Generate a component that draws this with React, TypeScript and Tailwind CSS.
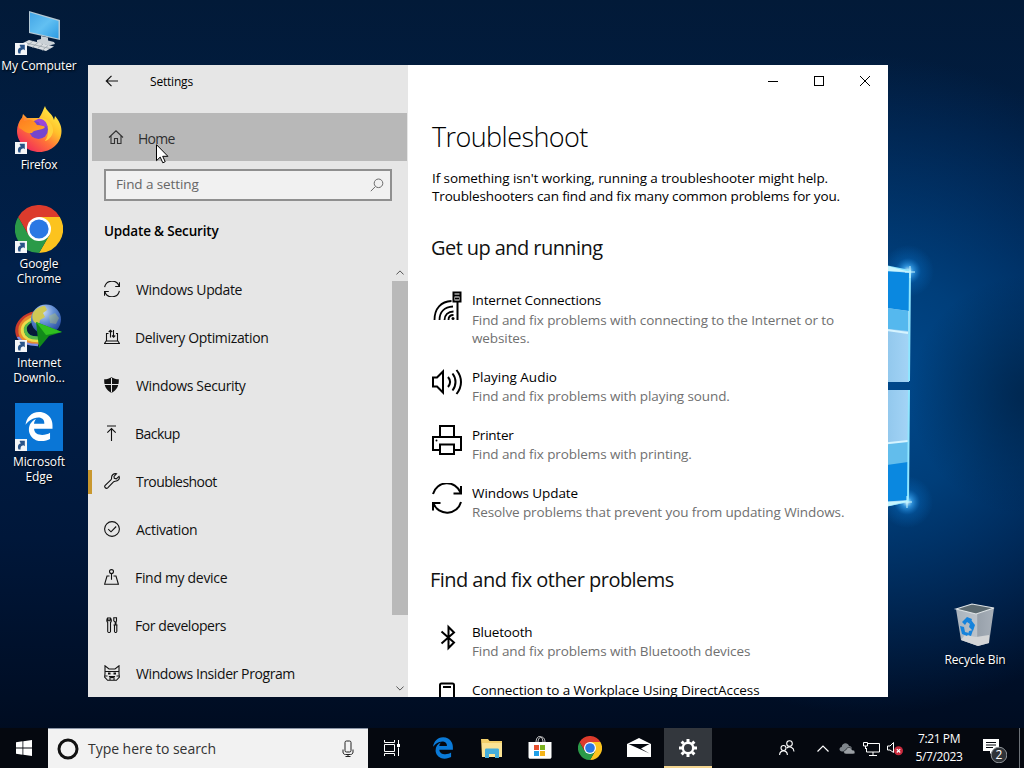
import React from 'react'

type IconProps = { className?: string }

const EDGE_PATH =
  'M25.714 228.163c.111-.162.23-.323.342-.485-.021.162-.045.323-.065.485h-.277zm460.572 15.508c0-44.032-7.754-84.465-28.801-122.405C416.498 47.879 343.912 8.001 258.893 8.001 118.962 7.724 40.617 113.214 26.056 227.679c42.429-61.312 117.073-121.376 220.375-124.966 0 0 109.666 0 99.419 104.957H169.997c6.369-37.386 18.554-58.986 34.339-78.915-75.048 34.893-121.85 96.096-120.742 188.315.83 71.448 50.124 144.836 120.743 171.976 83.357 31.843 192.776 7.2 240.132-21.324V363.307c-80.864 56.494-270.871 60.925-272.255-67.572h314.073v-52.064z'

/* ---------- Desktop icons ---------- */

const ShortcutArrow = () => (
  <svg viewBox="0 0 12 12" className="absolute bottom-0 left-0 w-3 h-3">
    <rect width="12" height="12" fill="#f4f6f8" />
    <path d="M3.500 10.500C2.200 7 3.400 4.600 6 4.200L4.800 3V1.800h5v5.400L8.400 6.200C6.200 6.600 5.200 8 5.600 10.500z" fill="#2a5488" />
  </svg>
)

const ComputerIcon = () => (
  <svg viewBox="0 0 48 48" className="w-12 h-12">
    <defs>
      <linearGradient id="screen" x1="0" y1="0" x2="1" y2="1">
        <stop offset="0" stopColor="#43a5e6" />
        <stop offset="0.5" stopColor="#62c0f2" />
        <stop offset="1" stopColor="#2c9be3" />
      </linearGradient>
    </defs>
    <path d="M14 4l31 9v20l-31-7z" fill="#b4c8d4" />
    <path d="M15 5.500l28.500 8.500v17.500L15 25z" fill="url(#screen)" />
    <path d="M26 29l7 1.500v3l6 1.500 1 2-6 1.500-12-3v-2.500l4-1z" fill="#c9d0d5" />
    <path d="M14 33l25 6.500-8 4.500L6 37z" fill="#dadee1" />
    <path d="M11 36l24 5.500M18 34l-6 5M23 35.500l-6 5M28 37l-6 5M33 38.500l-6 5" stroke="#9aa4ab" strokeWidth="0.800" />
  </svg>
)

const FirefoxIcon = () => (
  <svg viewBox="0 0 48 48" className="w-12 h-12">
    <defs>
      <linearGradient id="fox" x1="0.850" y1="0.050" x2="0.150" y2="0.950">
        <stop offset="0" stopColor="#fff14a" />
        <stop offset="0.350" stopColor="#ffc02a" />
        <stop offset="0.620" stopColor="#ff7139" />
        <stop offset="1" stopColor="#f0245e" />
      </linearGradient>
      <linearGradient id="foxhead" x1="0" y1="0" x2="1" y2="1">
        <stop offset="0" stopColor="#ff7a1e" />
        <stop offset="1" stopColor="#ffa528" />
      </linearGradient>
    </defs>
    <path d="M30 0c1 5 8 8 9 14l1-4c4 5 6.500 9 6.500 15C46.500 37 36.500 46 24.500 46S2 37 2 25c0-5 2-10 5-13l1-4 4 4h12c3-4 4-8 6-12z" fill="url(#fox)" />
    <path d="M24 12c9-1 15 7 14 14-2 8-8 9-8 9 5-7 3-13-1-17z" fill="#ffd23c" />
    <circle cx="23.500" cy="23.500" r="9.500" fill="#7446cc" />
    <path d="M23 13c5-1 9 3 9.500 8l-7-2-2-3-4-1z" fill="#9a46d8" />
    <path d="M4 22c-1-5 2-9 4-11l1 4 4-1c4-1 7 2 9 5 4 0 7 1 8 2-1 2-4 2.500-7 3-3 .5-5 1-6 3C10 28 9 24 4 22z" fill="url(#foxhead)" />
  </svg>
)

const ChromeIcon = ({ className }: IconProps) => (
  <svg viewBox="0 0 48 48" className={className}>
    <path d="M24 12h20.800A24 24 0 0 1 24 48l10.400-18z" fill="#fcc31e" />
    <path d="M3.200 12A24 24 0 0 0 24 48l10.400-18L13.600 30z" fill="#2b9a48" />
    <path d="M3.200 12A24 24 0 0 1 44.800 12H24L13.600 30z" fill="#dc3b2c" />
    <circle cx="24" cy="24" r="12" fill="#fff" />
    <circle cx="24" cy="24" r="9.600" fill="#2b78e4" />
  </svg>
)

const DownloadManagerIcon = () => (
  <svg viewBox="0 0 48 48" className="w-12 h-12">
    <defs>
      <radialGradient id="globe" cx="0.400" cy="0.250" r="0.800">
        <stop offset="0" stopColor="#cfdcf4" />
        <stop offset="0.450" stopColor="#6490d4" />
        <stop offset="1" stopColor="#1c3f96" />
      </radialGradient>
    </defs>
    <g fill="none" strokeWidth="3.400">
      <path d="M20 9C9 11 1 19 2 28s9 12 22 11" stroke="#c83a2b" />
      <path d="M20 11.500C11 13 4 20 5 28s8 11 19 10" stroke="#e88a2d" />
      <path d="M20 14C13 16 6.500 21 7.500 27.500s8 9.500 17 9" stroke="#ecdc4a" />
      <path d="M20 17C14 19 9.500 22 10.500 27s6 7.500 14 7" stroke="#57b84a" />
      <path d="M3 33c4 7 12 8 20 8" stroke="#7c8fe6" strokeWidth="2.500" />
    </g>
    <path d="M20 17c-6 2-9 6-8 9s4 5 10 5z" fill="#061a38" />
    <circle cx="31" cy="15.500" r="15" fill="url(#globe)" />
    <path d="M18 9c3-5 8-7 12-7l2 4-4 3 2 4-5 3-1 5-5-3c-2-3-2-6-1-9z" fill="#d0c955" />
    <path d="M34 12l6-3 4 5-3 6-6-1z" fill="#b8c46a" opacity="0.400" />
    <path d="M21 18l26 10-13 4-10 12z" fill="#128a1a" />
    <path d="M21 18l26 10-16 3z" fill="#30c020" />
  </svg>
)

const EdgeTileIcon = () => (
  <svg viewBox="0 0 48 48" className="w-12 h-12">
    <rect width="48" height="48" fill="#0a76d6" />
    <svg x="9" y="8" width="30" height="31" viewBox="0 0 512 512">
      <path d={EDGE_PATH} fill="#fff" />
    </svg>
  </svg>
)

const RecycleBinIcon = () => (
  <svg viewBox="0 0 48 48" className="w-12 h-12">
    <defs>
      <linearGradient id="bin" x1="0" y1="0" x2="1" y2="0">
        <stop offset="0" stopColor="#a9b3bd" />
        <stop offset="0.550" stopColor="#bcc3ca" />
        <stop offset="0.570" stopColor="#98a1ab" />
        <stop offset="1" stopColor="#a7afb8" />
      </linearGradient>
    </defs>
    <path d="M5 8l20 4 18-5-5 35-11 3-17-6z" fill="url(#bin)" />
    <path d="M10 39l4-5 11 2 13-2 0 8-11 3z" fill="#d4d5d6" />
    <path d="M5 8l16-5 22 4-18 6z" fill="#5c6a70" stroke="#dfe4e6" strokeWidth="1.200" />
    <g fill="#1583dc">
      <path d="M11 21l5-5 5 2-2 5-3-2-2 3z" />
      <path d="M20 19l4 5-2 6-4-4z" />
      <path d="M9 25l4 1 1 5 4 1-2 3-5-2z" />
      <path d="M18 30l4-1-2 6-3-1z" />
    </g>
  </svg>
)

const desktopShortcuts = [
  { label: ['My Computer'], icon: <ComputerIcon />, top: 'top-[7px]', tracking: 'tracking-[-0.1px]' },
  { label: ['Firefox'], icon: <FirefoxIcon />, top: 'top-[106px]', tracking: 'tracking-[-0.25px]' },
  { label: ['Google', 'Chrome'], icon: <ChromeIcon className="w-12 h-12" />, top: 'top-[205px]', tracking: 'tracking-[-0.1px]' },
  { label: ['Internet', 'Downlo...'], icon: <DownloadManagerIcon />, top: 'top-[304px]', tracking: 'tracking-[-0.1px]' },
  { label: ['Microsoft', 'Edge'], icon: <EdgeTileIcon />, top: 'top-[403px]', tracking: 'tracking-[-0.1px]' },
]

const Wallpaper = () => (
  <svg viewBox="0 0 1024 768" className="absolute inset-0 w-full h-full">
    <defs>
      <linearGradient id="sky" x1="0" y1="0" x2="0" y2="1">
        <stop offset="0" stopColor="#021a38" />
        <stop offset="0.350" stopColor="#00204a" />
        <stop offset="0.700" stopColor="#00173a" />
        <stop offset="1" stopColor="#000a1c" />
      </linearGradient>
      <radialGradient id="glow" gradientUnits="userSpaceOnUse" cx="870" cy="385" r="330">
        <stop offset="0" stopColor="#004a8e" />
        <stop offset="0.350" stopColor="#004280" stopOpacity="0.900" />
        <stop offset="1" stopColor="#003a78" stopOpacity="0" />
      </radialGradient>
      <radialGradient id="shade" gradientUnits="userSpaceOnUse" cx="1030" cy="395" r="120">
        <stop offset="0" stopColor="#002348" stopOpacity="0.800" />
        <stop offset="1" stopColor="#002348" stopOpacity="0" />
      </radialGradient>
      <radialGradient id="flare">
        <stop offset="0" stopColor="#e8ffff" />
        <stop offset="0.200" stopColor="#3fb0ff" stopOpacity="0.700" />
        <stop offset="0.500" stopColor="#0a80e0" stopOpacity="0.250" />
        <stop offset="1" stopColor="#0a80e0" stopOpacity="0" />
      </radialGradient>
      <linearGradient id="pane" x1="0" y1="0" x2="1" y2="0">
        <stop offset="0" stopColor="#8cc4ea" />
        <stop offset="1" stopColor="#a4d4f6" />
      </linearGradient>
    </defs>
    <rect width="1024" height="768" fill="url(#sky)" />
    <rect width="1024" height="768" fill="url(#glow)" />
    <rect width="1024" height="768" fill="url(#shade)" />
    <circle cx="908" cy="271" r="26" fill="url(#flare)" />
    <circle cx="907" cy="502" r="26" fill="url(#flare)" />
    <path d="M880 265l30 6-1 111h-29z" fill="url(#pane)" />
    <path d="M880 270l29 3v38l-29-4z" fill="#0a88e0" />
    <path d="M880 307l28 4v20l-28-3z" fill="#55b8ee" />
    <path d="M880 329l28 4" stroke="#d6f4ff" strokeWidth="2" />
    <path d="M880 390h29v112l-29 6z" fill="url(#pane)" />
    <path d="M880 444l28-3v23l-28 3z" fill="#62bdec" />
    <path d="M880 466l28-4v38l-28 2z" fill="#0a88e0" />
    <path d="M880 444l28-3" stroke="#d6f4ff" strokeWidth="2" />
    <path d="M880 265l30 6-1 110" fill="none" stroke="#8fe6ff" strokeWidth="2" />
    <path d="M909 390l-1 111-28 6" fill="none" stroke="#8fe6ff" strokeWidth="2" />
    <path d="M880 264l30 8-30-1zM880 502l28-1-28 7z" fill="#c8f6ff" />
    <path d="M905 272h10M910 266v12M902 502h10M907 496v12" stroke="#c8f6ff" />
  </svg>
)

/* ---------- Sidebar icons, 16px line drawings ---------- */

const Line = ({ children, className = 'w-4 h-4' }: { children: React.ReactNode; className?: string }) => (
  <svg viewBox="0 0 16 16" className={className} fill="none" stroke="#111" strokeWidth="1.100">
    {children}
  </svg>
)

const HomeIcon = () => (
  <Line>
    <path d="M1 8.500L8 1.800l7 6.700M3 7v7.500h3.500V9.500h3v5H13V7" />
  </Line>
)

const SyncIcon = () => (
  <Line>
    <path d="M.6 6.200A7.600 7.600 0 0 1 15.200 5.200M15.500 1.200v4.300h-4.300M15.400 9.800A7.600 7.600 0 0 1 .8 10.800M.5 14.800v-4.300h4.300" />
  </Line>
)

const DeliveryIcon = () => (
  <Line>
    <path d="M4.500 4.500H2.500v7.500h11V4.500H12M2.500 11.500L.5 14.500h15l-2-3M6.500 8.500V1.200M4.700 3l1.800-1.800L8.200 3M9.500 1v7M8 6.500l1.600 1.600 1.600-1.600" />
  </Line>
)

const ShieldIcon = () => (
  <svg viewBox="0 0 16 16" className="w-4 h-4">
    <path d="M7.500.2C5.500 1.500 3 2.200.2 2.300 0 9 2 13 7.500 16 13 13 15 9 14.800 2.300 12 2.200 9.500 1.500 7.500.2z" fill="#111" />
    <path d="M7.500 1v14.500M0 7.500h15" stroke="#e6e6e6" strokeWidth="1" />
  </svg>
)

const BackupIcon = () => (
  <Line>
    <path d="M3 1h9M7.500 16V3.500M3.300 7.700l4.200-4.200 4.200 4.200" />
  </Line>
)

const WrenchIcon = () => (
  <Line>
    <path d="M15 3.300l-2.700 2.500-2-.4-.3-2L12.500.8C10 0 7.200 2 7.600 5.200c0 .8-.1 1-.7 1.600L1.200 12.300c-1.500 1.700.9 4 2.500 2.500l5.800-6c.6-.6 1-.6 1.700-.6C14.200 8.200 16.200 5.800 15 3.300z" />
  </Line>
)

const ActivationIcon = () => (
  <Line>
    <circle cx="8" cy="8" r="7.400" />
    <path d="M4.200 8.200l2.800 2.600 5.200-5.300" />
  </Line>
)

const FindDeviceIcon = () => (
  <Line>
    <circle cx="7.500" cy="2.600" r="2" />
    <path d="M7.500 4.600v6.200M5.500 7H3L.6 15.300h13.800L12 7H9.500" />
  </Line>
)

const DevelopersIcon = () => (
  <Line>
    <path d="M4 .8v3h2v-3C7.800 2 7.600 4.500 6.500 5.500v9c-.3 1.300-2.500 1.300-2.800 0v-9C2.500 4.500 2.400 2 4 .8zM9.800.8h2.700v3L12 5v3h.8v6.500c-.3 1.300-2 1.300-2.300 0V8h.7V5l-1.400-1.200zM9.500 8h4" />
  </Line>
)

const InsiderIcon = () => (
  <Line>
    <path d="M1 .8v7.700L.6 12l3 3.300h8.800l3-3.300-.4-3.500V.8l-4 3.200H5zM1 6.500h14M.5 11h3M12.500 11h3M5 11.500c1 1.500 5 1.500 6 0M5 11.500h6M6 15v-2M10 15v-2" />
    <path d="M4 8.500h2.500M9.500 8.500H12" strokeWidth="2" />
  </Line>
)

const sidebarItems = [
  { name: 'Windows Update', icon: <SyncIcon />, offset: 'ml-4', tracking: 'tracking-[-0.36px]' },
  { name: 'Delivery Optimization', icon: <DeliveryIcon />, offset: 'ml-[15px]', tracking: 'tracking-[-0.34px]' },
  { name: 'Windows Security', icon: <ShieldIcon />, offset: 'ml-4', tracking: 'tracking-[-0.36px]' },
  { name: 'Backup', icon: <BackupIcon />, offset: 'ml-[15px]', tracking: 'tracking-[-0.55px]' },
  { name: 'Troubleshoot', icon: <WrenchIcon />, offset: 'ml-4', tracking: 'tracking-[-0.57px]', active: true },
  { name: 'Activation', icon: <ActivationIcon />, offset: 'ml-4', tracking: 'tracking-[-0.3px]' },
  { name: 'Find my device', icon: <FindDeviceIcon />, offset: 'ml-[15px]', tracking: 'tracking-[-0.32px]' },
  { name: 'For developers', icon: <DevelopersIcon />, offset: 'ml-[15px]', tracking: 'tracking-[-0.43px]' },
  { name: 'Windows Insider Program', icon: <InsiderIcon />, offset: 'ml-4', tracking: 'tracking-[-0.41px]' },
]

/* ---------- Troubleshooter icons, 32px ---------- */

const Big = ({ children }: { children: React.ReactNode }) => (
  <svg viewBox="0 0 32 32" className="w-8 h-8" fill="none" stroke="#000" strokeWidth="2">
    {children}
  </svg>
)

const InternetIcon = () => (
  <Big>
    <path d="M3.500 30C3.500 18.500 10 11.500 20.500 11M8.500 30c0-8 5-13 13.500-13.500M13.500 30c0-5 3.500-8.500 9-8.500M17.500 30c0-3 2-5 5-5" strokeWidth="1.800" />
    <path d="M22.500 2.500h7v9h-7zM26.500 11.500V30" />
    <path d="M22 5.500h8M24 8.500h4" />
    <circle cx="22" cy="28.500" r="1.500" fill="#000" stroke="none" />
  </Big>
)

const AudioIcon = () => (
  <Big>
    <path d="M2 10.500h4l6-6v21l-6-6H2zM17 10c2.500 3 2.500 7 0 10M21.500 6.500c4 5 4 12 0 17M25.500 3c6 7.500 6 16.500 0 24" />
  </Big>
)

const PrinterIcon = () => (
  <Big>
    <path d="M9 12V1h14v11M9 25H2V12h28v13h-7M9 19.500h14V29H9z" />
    <circle cx="5.500" cy="15.500" r="1" fill="#000" stroke="none" />
  </Big>
)

const UpdateIcon = () => (
  <Big>
    <path d="M2 11a14.500 14.500 0 0 1 27.500-1.500M30 3v7.500h-7.500M30 19a14.500 14.500 0 0 1-27.500 1.500M2 27.500V20h7.500" />
  </Big>
)

const BluetoothIcon = () => (
  <Big>
    <path d="M10.500 9.500l12.500 11-5.500 5.500V5L23 10.500 10.500 21.500" />
  </Big>
)

const WorkplaceIcon = () => (
  <Big>
    <path d="M9 30V5c0-1 .5-1.500 1.500-1.500h11c1 0 1.500.5 1.500 1.500v25z" />
    <path d="M12 7h8" />
  </Big>
)

type Troubleshooter = {
  title: string
  lines: string[]
  icon: React.ReactNode
  titleTracking: string
  gap: string
}

const upAndRunning: Troubleshooter[] = [
  {
    title: 'Internet Connections',
    lines: ['Find and fix problems with connecting to the Internet or to', 'websites.'],
    icon: <InternetIcon />,
    titleTracking: 'tracking-[-0.17px] mb-px',
    gap: 'mb-5',
  },
  {
    title: 'Playing Audio',
    lines: ['Find and fix problems with playing sound.'],
    icon: <AudioIcon />,
    titleTracking: 'tracking-[0px]',
    gap: 'mb-5',
  },
  {
    title: 'Printer',
    lines: ['Find and fix problems with printing.'],
    icon: <PrinterIcon />,
    titleTracking: 'tracking-[-0.25px]',
    gap: 'mb-5',
  },
  {
    title: 'Windows Update',
    lines: ['Resolve problems that prevent you from updating Windows.'],
    icon: <UpdateIcon />,
    titleTracking: 'tracking-[-0.08px]',
    gap: '',
  },
]

const otherProblems: Troubleshooter[] = [
  {
    title: 'Bluetooth',
    lines: ['Find and fix problems with Bluetooth devices'],
    icon: <BluetoothIcon />,
    titleTracking: 'tracking-[-0.2px]',
    gap: 'mb-5',
  },
  {
    title: 'Connection to a Workplace Using DirectAccess',
    lines: [],
    icon: <WorkplaceIcon />,
    titleTracking: 'tracking-[-0.08px]',
    gap: '',
  },
]

const TroubleshooterRow = ({ item }: { item: Troubleshooter }) => (
  <div className={`flex ${item.gap}`}>
    <div className="w-8 h-8 -ml-px mr-[9px] shrink-0">{item.icon}</div>
    <div className="whitespace-nowrap">
      <div className={`text-[13.5px] leading-5 text-black ${item.titleTracking}`}>{item.title}</div>
      {item.lines.map((line) => (
        <div key={line} className="text-[13.5px] leading-[18px] text-[#707070] tracking-[-0.1px]">
          {line}
        </div>
      ))}
    </div>
  </div>
)

/* ---------- Settings window ---------- */

const Sidebar = () => (
  <aside className="w-80 shrink-0 bg-[#e6e6e6] flex flex-col">
    <div className="h-8 shrink-0 flex items-center">
      <svg viewBox="0 0 14 14" className="ml-[17px] w-3.5 h-3.5" fill="none" stroke="#111" strokeWidth="1.200">
        <path d="M13 7H1.500M6.500 1.800L1.300 7l5.200 5.200" />
      </svg>
      <span className="ml-[31px] pt-0.5 text-xs text-black tracking-[-0.2px]">Settings</span>
    </div>
    <div className="mt-4 ml-1 mr-px h-12 shrink-0 bg-[#b8b8b8] flex items-center">
      <div className="ml-4 opacity-80"><HomeIcon /></div>
      <span className="ml-[14px] pt-0.5 text-[14px] text-[#2f2f2f] tracking-[-0.7px]">Home</span>
    </div>
    <div className="mt-2 mx-4 h-8 shrink-0 border-2 border-[#8f8f8f] bg-[#f1f1f1] flex items-center justify-between pl-[10px] pr-1.5">
      <span className="text-[13.5px] text-[#666] -mt-0.5 tracking-[-0.1px]">Find a setting</span>
      <svg viewBox="0 0 14 14" className="w-3.5 h-3.5" fill="none" stroke="#6b6b6b" strokeWidth="1">
        <circle cx="8.500" cy="5.300" r="4.300" />
        <path d="M5.400 8.500L.8 13.200" />
      </svg>
    </div>
    <div className="mt-5 ml-4 text-[13.5px] leading-5 font-semibold text-black tracking-[-0.17px]">
      Update &amp; Security
    </div>
    <div className="mt-[25px] flex-1 min-h-0 flex overflow-hidden">
      <nav className="flex-1">
        {sidebarItems.map((item) => (
          <div key={item.name} className="h-12 flex items-center">
            <div className={item.active ? 'w-1 h-6 bg-[#c9982f]' : 'w-1 h-6'} />
            <div className="ml-3 -mt-0.5">{item.icon}</div>
            <span className={`text-[14px] leading-5 text-[#111] whitespace-nowrap ${item.offset} ${item.tracking}`}>
              {item.name}
            </span>
          </div>
        ))}
      </nav>
      <div className="w-4 flex flex-col items-center">
        <svg viewBox="0 0 8 5" className="mt-1 w-2 h-[5px]" fill="none" stroke="#555">
          <path d="M.4 4.500L4 .9l3.600 3.600" />
        </svg>
        <div className="mt-1.5 h-[334px] w-full bg-[#b9b9b9]" />
        <svg viewBox="0 0 8 5" className="mt-[71px] w-2 h-[5px]" fill="none" stroke="#555">
          <path d="M.4.5L4 4.100 7.600.5" />
        </svg>
      </div>
    </div>
  </aside>
)

const SettingsWindow = () => (
  <div className="absolute left-[88px] top-[65px] w-[800px] h-[632px] flex overflow-hidden bg-white">
    <Sidebar />
    <main className="flex-1 min-w-0 flex flex-col">
      <div className="h-8 shrink-0 flex justify-end">
        <svg viewBox="0 0 138 32" className="w-[138px] h-8" fill="none" stroke="#000">
          <path d="M18 16.500h10" />
          <rect x="64.500" y="11.500" width="9" height="9" />
          <path d="M110 11l10 10M120 11l-10 10" />
        </svg>
      </div>
      <div className="pl-6">
        <h1 className="mt-[22px] text-[27px] leading-9 font-light text-black whitespace-nowrap tracking-[-0.58px]">
          Troubleshoot
        </h1>
        <p className="mt-[14px] text-[13.5px] leading-[18px] text-black whitespace-nowrap tracking-[-0.15px]">
          <span className="tracking-[-0.09px]">If something isn't working, running a troubleshooter might help.</span>
          <br />
          Troubleshooters can find and fix many common problems for you.
        </p>
        <h2 className="mt-[29px] -ml-px text-[20px] leading-7 text-[#111] whitespace-nowrap tracking-[-0.57px]">
          Get up and running
        </h2>
        <div className="mt-7">
          {upAndRunning.map((item) => (
            <TroubleshooterRow key={item.title} item={item} />
          ))}
        </div>
        <h2 className="mt-[45px] -ml-0.5 text-[20px] leading-7 text-[#111] whitespace-nowrap tracking-[-0.54px]">
          Find and fix other problems
        </h2>
        <div className="mt-7">
          {otherProblems.map((item) => (
            <TroubleshooterRow key={item.title} item={item} />
          ))}
        </div>
      </div>
    </main>
  </div>
)

/* ---------- Taskbar ---------- */

const Taskbar = () => (
  <footer className="absolute inset-x-0 bottom-0 h-10 bg-[#05080f] flex items-stretch text-white">
    <div className="w-12 flex items-center justify-center">
      <svg viewBox="0 0 16 16" className="w-4 h-4" fill="#fff">
        <path d="M0 2.200l6.500-.9v6.300H0zM7.300 1.200L16 0v7.600H7.300zM0 8.400h6.500v6.300L0 13.800zM7.300 8.400H16V16l-8.700-1.200z" />
      </svg>
    </div>
    <div className="w-80 bg-[#f2f2f2] border-t border-[#8b95a5] flex items-center">
      <svg viewBox="0 0 22 22" className="ml-[9px] w-[22px] h-[22px]" fill="none">
        <circle cx="11" cy="11" r="9" stroke="#111" strokeWidth="3" />
      </svg>
      <span className="ml-[9px] flex-1 text-[14px] text-[#333] whitespace-nowrap tracking-[-0.04px]">
        Type here to search
      </span>
      <svg viewBox="0 0 12 18" className="mr-[14px] w-3 h-[18px]" fill="none" stroke="#222">
        <rect x="3" y="1" width="6" height="11" rx="1.500" />
        <path d="M1 9.500v2.500c0 1.500 1 2.500 2.500 2.500h5c1.500 0 2.500-1 2.500-2.500V9.500M6 14.500V16.500M3.500 16.500h5" />
      </svg>
    </div>
    <div className="w-12 flex items-center justify-center">
      <svg viewBox="0 0 16 16" className="w-4 h-4" fill="none" stroke="#fff">
        <path d="M.5 0v2.500h10V0M.5 4.500h10v7H.5zM.5 16v-2.500h10V16M14.500 0v4M14.500 7.500V16" />
        <path d="M13 5.500h3" strokeWidth="3" />
      </svg>
    </div>
    <div className="w-[52px] flex items-center justify-center pl-0.5">
      <svg viewBox="0 0 512 512" className="w-[22px] h-[22px]">
        <path d={EDGE_PATH} fill="#0a7ad8" />
      </svg>
    </div>
    <div className="w-[46px] flex items-center justify-center pl-0.5">
      <svg viewBox="0 0 22 20" className="w-[22px] h-5">
        <path d="M0 1h7l1.500 2H21v16H1z" fill="#f3cf6a" />
        <path d="M1 5h20v14H1z" fill="#fbe394" />
        <path d="M4 20v-8c0-1 .5-1.500 1.500-1.500h11c1 0 1.500.5 1.500 1.500v8h-4v-4H8v4z" fill="#45aedb" />
      </svg>
    </div>
    <div className="w-[52px] flex items-center justify-center">
      <svg viewBox="0 0 24 24" className="w-6 h-6">
        <path d="M8 7c0-4 1.500-6.500 3.500-6.500S15 3 15 7M10 7c0-4 1.500-6 3.500-6s3.500 2 3.500 6" fill="none" stroke="#ddd" />
        <path d="M.5 6h23v15c0 1-.8 1.800-1.800 1.800H2.300c-1 0-1.800-.8-1.800-1.800z" fill="#fff" />
        <path d="M6 9h5v5H6z" fill="#e8502f" />
        <path d="M12 9h5v5h-5z" fill="#7db321" />
        <path d="M6 15h5v5H6z" fill="#1fa0e8" />
        <path d="M12 15h5v5h-5z" fill="#f5b51b" />
      </svg>
    </div>
    <div className="w-[46px] flex items-center justify-center pl-0.5">
      <ChromeIcon className="w-6 h-6" />
    </div>
    <div className="w-[52px] flex items-center justify-center pl-0.5">
      <svg viewBox="0 0 24 20" className="w-6 h-5">
        <path d="M0 6L12 0l12 6v13H0z" fill="#fff" />
        <path d="M1.500 6h21L14 10.500l8.500 5-11-5z" fill="#05080f" />
      </svg>
    </div>
    <div className="w-12 flex items-center justify-center bg-[#33373d] border-b-2 border-[#f3d590]">
      <svg viewBox="-10 -10 20 20" className="mt-px w-5 h-5" fill="none" stroke="#fff">
        <circle r="5.200" strokeWidth="2.400" />
        <path
          d="M0-9v3.200M0 9V5.800M-9 0h3.200M9 0H5.800M-6.400-6.400L-4.200-4.200M6.400 6.400L4.200 4.200M-6.400 6.400L-4.200 4.200M6.400-6.400L4.200-4.200"
          strokeWidth="3"
        />
      </svg>
    </div>
    <div className="flex-1 flex items-center justify-end">
      <svg viewBox="0 0 16 16" className="w-4 h-4" fill="none" stroke="#fff" strokeWidth="1.100">
        <circle cx="10.500" cy="3.500" r="2.800" />
        <circle cx="4.500" cy="8" r="2.500" />
        <path d="M.6 15c.3-5.500 7.500-5.500 7.800 0M7.800 8c2.500-2.500 7-.5 7.200 3.500" />
      </svg>
      <svg viewBox="0 0 12 7" className="ml-[22px] w-3 h-[7px]" fill="none" stroke="#fff" strokeWidth="1.200">
        <path d="M.5 6.500L6 1l5.500 5.500" />
      </svg>
      <svg viewBox="0 0 16 11" className="ml-[10px] w-4 h-[11px]">
        <path d="M3 8.500C0 8.500-.5 4.500 2.700 4 3-.5 9-1 10 3c3 0 3.500 3 2 5.500z" fill="#7f858b" />
        <path d="M7 11c-3 0-3-4 0-4 .5-3.500 5.500-3.500 6 0 3.500-.5 4 4 1 4z" fill="#9a9fa4" stroke="#05080f" strokeWidth="0.500" />
      </svg>
      <svg viewBox="0 0 17 15" className="ml-2 w-[17px] h-[15px]" fill="none" stroke="#fff">
        <path d="M5 2.500h11.500v8.500H3.500V7M10 11v3M6 14.500h8" />
        <path d="M.5 1.500h4V5h-4zM2.500 5v3" />
      </svg>
      <svg viewBox="0 0 17 16" className="ml-[7px] w-[17px] h-4" fill="none" stroke="#fff">
        <path d="M.5 6H3l3.500-3.500v10L3 10H.5z" />
        <circle cx="11.500" cy="10.800" r="4.500" fill="#c92a3d" stroke="none" />
        <path d="M9.800 9.100l3.400 3.400M13.200 9.100l-3.400 3.400" strokeWidth="1.200" />
      </svg>
      <div className="ml-2 w-[54px] text-center text-xs leading-[18px] whitespace-nowrap tracking-[-0.4px]">
        <div className="-mx-2">7:21 PM</div>
        <div className="-mx-2">5/7/2023</div>
      </div>
      <div className="relative ml-[17px] mt-1.5 w-6 h-6">
        <svg viewBox="0 0 24 24" className="w-6 h-6">
          <path d="M0 0h16v12h-6l-3 3v-3H0z" fill="#fff" />
          <path d="M3 3.500h10M3 6h10M3 8.500h7" stroke="#05080f" />
          <circle cx="16" cy="16" r="7.800" fill="#2f3338" stroke="#8d9196" strokeWidth="1" />
        </svg>
        <span className="absolute left-2 top-2 w-4 text-center text-xs leading-4">2</span>
      </div>
      <div className="ml-3 w-px h-10 bg-[#6d7278]" />
      <div className="w-1" />
    </div>
  </footer>
)

const App: React.FC = () => {
  return (
    <div className="relative w-[1024px] h-[768px] overflow-hidden bg-[#00173a] font-['Open_Sans','Noto_Sans',sans-serif]">
      <Wallpaper />

      {desktopShortcuts.map((shortcut) => (
        <div key={shortcut.label[0]} className={`absolute left-0 w-[78px] flex flex-col items-center ${shortcut.top}`}>
          <div className="relative w-12 h-12">
            {shortcut.icon}
            <ShortcutArrow />
          </div>
          <div
            className={`mt-[3px] text-center text-[12px] leading-[15px] text-white whitespace-nowrap [text-shadow:1px_1px_2px_#000] ${shortcut.tracking}`}
          >
            {shortcut.label.map((line) => (
              <div key={line}>{line}</div>
            ))}
          </div>
        </div>
      ))}

      <div className="absolute left-[936px] top-[601px] w-[78px] flex flex-col items-center">
        <RecycleBinIcon />
        <div className="mt-[3px] text-[12px] leading-[15px] text-white whitespace-nowrap tracking-[-0.15px] [text-shadow:1px_1px_2px_#000]">
          Recycle Bin
        </div>
      </div>

      <SettingsWindow />
      <Taskbar />

      {/* Mouse pointer */}
      <svg viewBox="0 0 13 20" className="absolute left-[156px] top-[144px] w-[13px] h-5">
        <path d="M.5.7v16l3.700-3.600 2.600 5.700 2.400-1.100-2.500-5.400h5.200z" fill="#fff" stroke="#000" />
      </svg>
    </div>
  )
}

export default App
